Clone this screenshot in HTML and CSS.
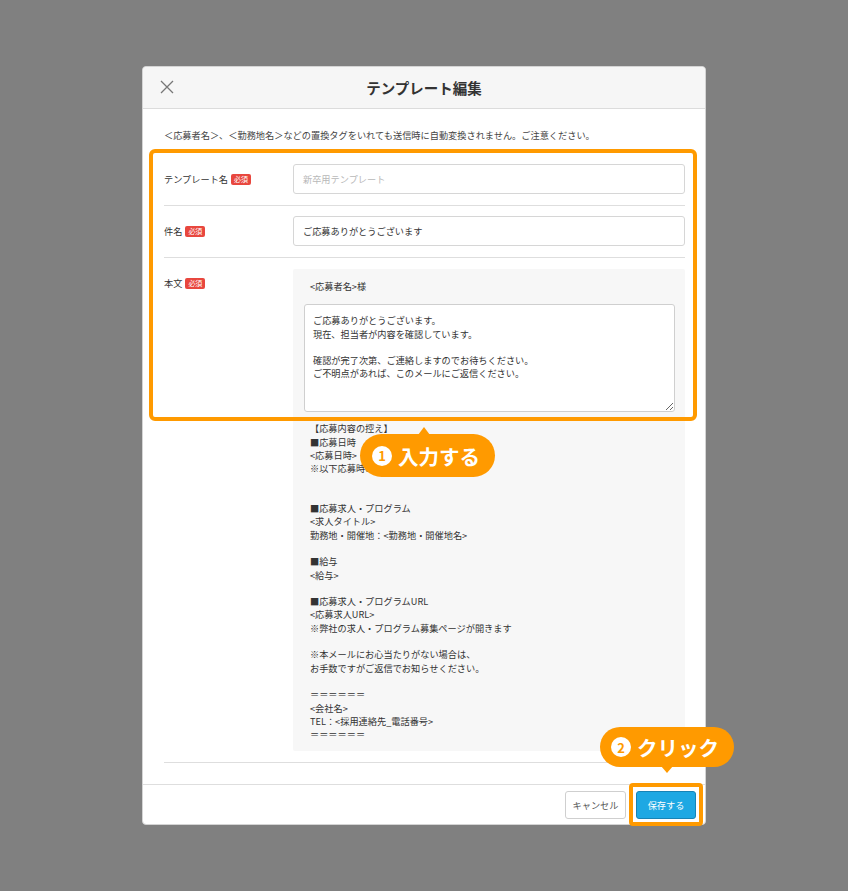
FILE: index.html
```html
<!DOCTYPE html>
<html lang="ja">
<head>
<meta charset="utf-8">
<title>テンプレート編集</title>
<link rel="stylesheet" href="styles.css">
</head>
<body>
<div class="modal">
  <div class="header">
    <span class="close">
      <svg width="14" height="14" viewBox="0 0 14 14"><path d="M1 1 L13 13 M13 1 L1 13" stroke="#777" stroke-width="1.3" fill="none"/></svg>
    </span>
    <h1 class="title">テンプレート編集</h1>
  </div>
  <div class="content">
    <p class="notice">＜応募者名＞、＜勤務地名＞などの置換タグをいれても送信時に自動変換されません。ご注意ください。</p>
    <div class="row">
      <div class="label">テンプレート名<span class="req">必須</span></div>
      <div class="field"><div class="input placeholder">新卒用テンプレート</div></div>
    </div>
    <div class="row">
      <div class="label">件名<span class="req">必須</span></div>
      <div class="field"><div class="input">ご応募ありがとうございます</div></div>
    </div>
    <div class="row">
      <div class="label">本文<span class="req">必須</span></div>
      <div class="field">
        <div class="bodybox">
          <div class="fixed">&lt;応募者名&gt;様</div>
          <textarea class="textarea">ご応募ありがとうございます。
現在、担当者が内容を確認しています。

確認が完了次第、ご連絡しますのでお待ちください。
ご不明点があれば、このメールにご返信ください。</textarea>
          <div class="fixed">【応募内容の控え】
■応募日時
&lt;応募日時&gt;
※以下応募時の入力内容です


■応募求人・プログラム
&lt;求人タイトル&gt;
勤務地・開催地：&lt;勤務地・開催地名&gt;

■給与
&lt;給与&gt;

■応募求人・プログラムURL
&lt;応募求人URL&gt;
※弊社の求人・プログラム募集ページが開きます

※本メールにお心当たりがない場合は、
お手数ですがご返信でお知らせください。

＝＝＝＝＝＝
&lt;会社名&gt;
TEL：&lt;採用連絡先_電話番号&gt;
＝＝＝＝＝＝</div>
        </div>
      </div>
    </div>
  </div>
  <div class="footer">
    <button class="btn cancel">キャンセル</button>
    <button class="btn save">保存する</button>
  </div>

  <div class="hl hl-form"></div>
  <div class="hl hl-save"></div>
  <div class="callout callout-1"><span class="num">1</span>入力する</div>
  <div class="callout callout-2"><span class="num">2</span>クリック</div>
</div>
</body>
</html>
```

FILE: styles.css
```css
* { box-sizing: border-box; }
html, body { margin: 0; padding: 0; }
body {
  background: #808080;
  font-family: "Noto Sans CJK JP", "Noto Sans", sans-serif;
  color: #333;
  width: 848px;
  height: 891px;
  overflow: hidden;
  padding-top: 66px;
}
.modal {
  position: relative;
  margin-left: 142px;
  width: 564px;
  background: #fff;
  border: 1px solid #d4d4d4;
  border-radius: 4px;
}
.header {
  height: 42px;
  background: #f6f6f6;
  border-bottom: 1px solid #dcdcdc;
  border-radius: 4px 4px 0 0;
  display: flex;
  align-items: center;
  justify-content: center;
  position: relative;
}
.close {
  position: absolute;
  left: 17px;
  top: 13px;
  width: 14px;
  height: 14px;
  display: block;
  line-height: 0;
}
.title {
  margin: 0;
  font-size: 14.5px;
  font-weight: bold;
  color: #333;
}
.content {
  padding: 19px 20px 21px 21px;
}
.notice {
  margin: 0 0 12px;
  font-size: 9.2px;
  line-height: 14px;
  color: #444;
}
.row {
  display: flex;
  align-items: flex-start;
  padding: 10px 0 11px;
  border-bottom: 1px solid #dedede;
}
.label {
  width: 129px;
  flex: none;
  font-size: 9.2px;
  line-height: 14px;
  padding-top: 8px;
  display: flex;
  align-items: center;
  color: #333;
}
.req {
  display: inline-block;
  background: #e8473e;
  color: #fff;
  font-size: 7px;
  line-height: 11px;
  padding: 0 3px;
  border-radius: 2px;
  margin-left: 3px;
}
.field { flex: 1; }
.input {
  height: 30px;
  border: 1px solid #d6d6d6;
  border-radius: 3px;
  padding: 0 9px;
  font-size: 9.2px;
  line-height: 28px;
  color: #333;
  background: #fff;
}
.input.placeholder { color: #b8b8b8; }
.bodybox {
  background: #f7f7f7;
  border-radius: 2px;
  padding: 11px 10px 10px 11px;
  margin-top: 1px;
}
.fixed {
  white-space: pre-line;
  font-size: 9.2px;
  line-height: 13.3px;
  padding-left: 6px;
  color: #333;
}
.textarea {
  display: block;
  width: 100%;
  height: 108px;
  margin: 11px 0 10px;
  border: 1px solid #cfcfcf;
  border-radius: 3px;
  padding: 9px 8px;
  font-family: "Noto Sans CJK JP", "Noto Sans", sans-serif;
  font-size: 9.2px;
  line-height: 13.3px;
  color: #333;
  background: #fff;
  resize: vertical;
  overflow: hidden;
}
.footer {
  border-top: 1px solid #dedede;
  padding: 6px 9px 5px;
  display: flex;
  justify-content: flex-end;
  gap: 10px;
}
.btn {
  height: 28px;
  border-radius: 3px;
  font-family: "Noto Sans CJK JP", "Noto Sans", sans-serif;
  font-size: 9.2px;
  padding: 0;
  cursor: pointer;
}
.cancel {
  width: 61px;
  background: #fff;
  border: 1px solid #cfcfcf;
  color: #555;
}
.save {
  width: 60px;
  background: #1ea8e3;
  border: 1px solid #1783b5;
  color: #fff;
}
.hl {
  position: absolute;
  border: 4px solid #ff9a00;
  border-radius: 6px;
  pointer-events: none;
}
.hl-form { left: 6px; top: 82px; width: 548px; height: 272px; }
.hl-save { left: 486px; top: 716px; width: 74px; height: 43px; border-radius: 4px; }
.callout {
  position: absolute;
  background: #ff9a00;
  color: #fff;
  font-weight: bold;
  font-size: 20.5px;
  display: flex;
  align-items: center;
  border-radius: 22px;
  white-space: nowrap;
}
.callout::after {
  content: "";
  position: absolute;
  border-left: 6px solid transparent;
  border-right: 6px solid transparent;
}
.num {
  display: inline-flex;
  align-items: center;
  justify-content: center;
  width: 20px;
  height: 20px;
  border-radius: 50%;
  background: #fff;
  color: #ff9a00;
  font-size: 13px;
  font-weight: bold;
  margin-right: 6px;
  line-height: 1;
}
.callout-1 {
  left: 217px; top: 367px; width: 135px; height: 43px;
  padding-left: 12px;
}
.callout-1::after {
  left: 58px; top: -7px;
  border-bottom: 8px solid #ff9a00;
}
.callout-2 {
  left: 457px; top: 660px; width: 134px; height: 40px;
  padding-left: 11px;
  border-radius: 20px;
}
.callout-2::after {
  left: 61px; bottom: -6px;
  border-top: 7px solid #ff9a00;
}
```
